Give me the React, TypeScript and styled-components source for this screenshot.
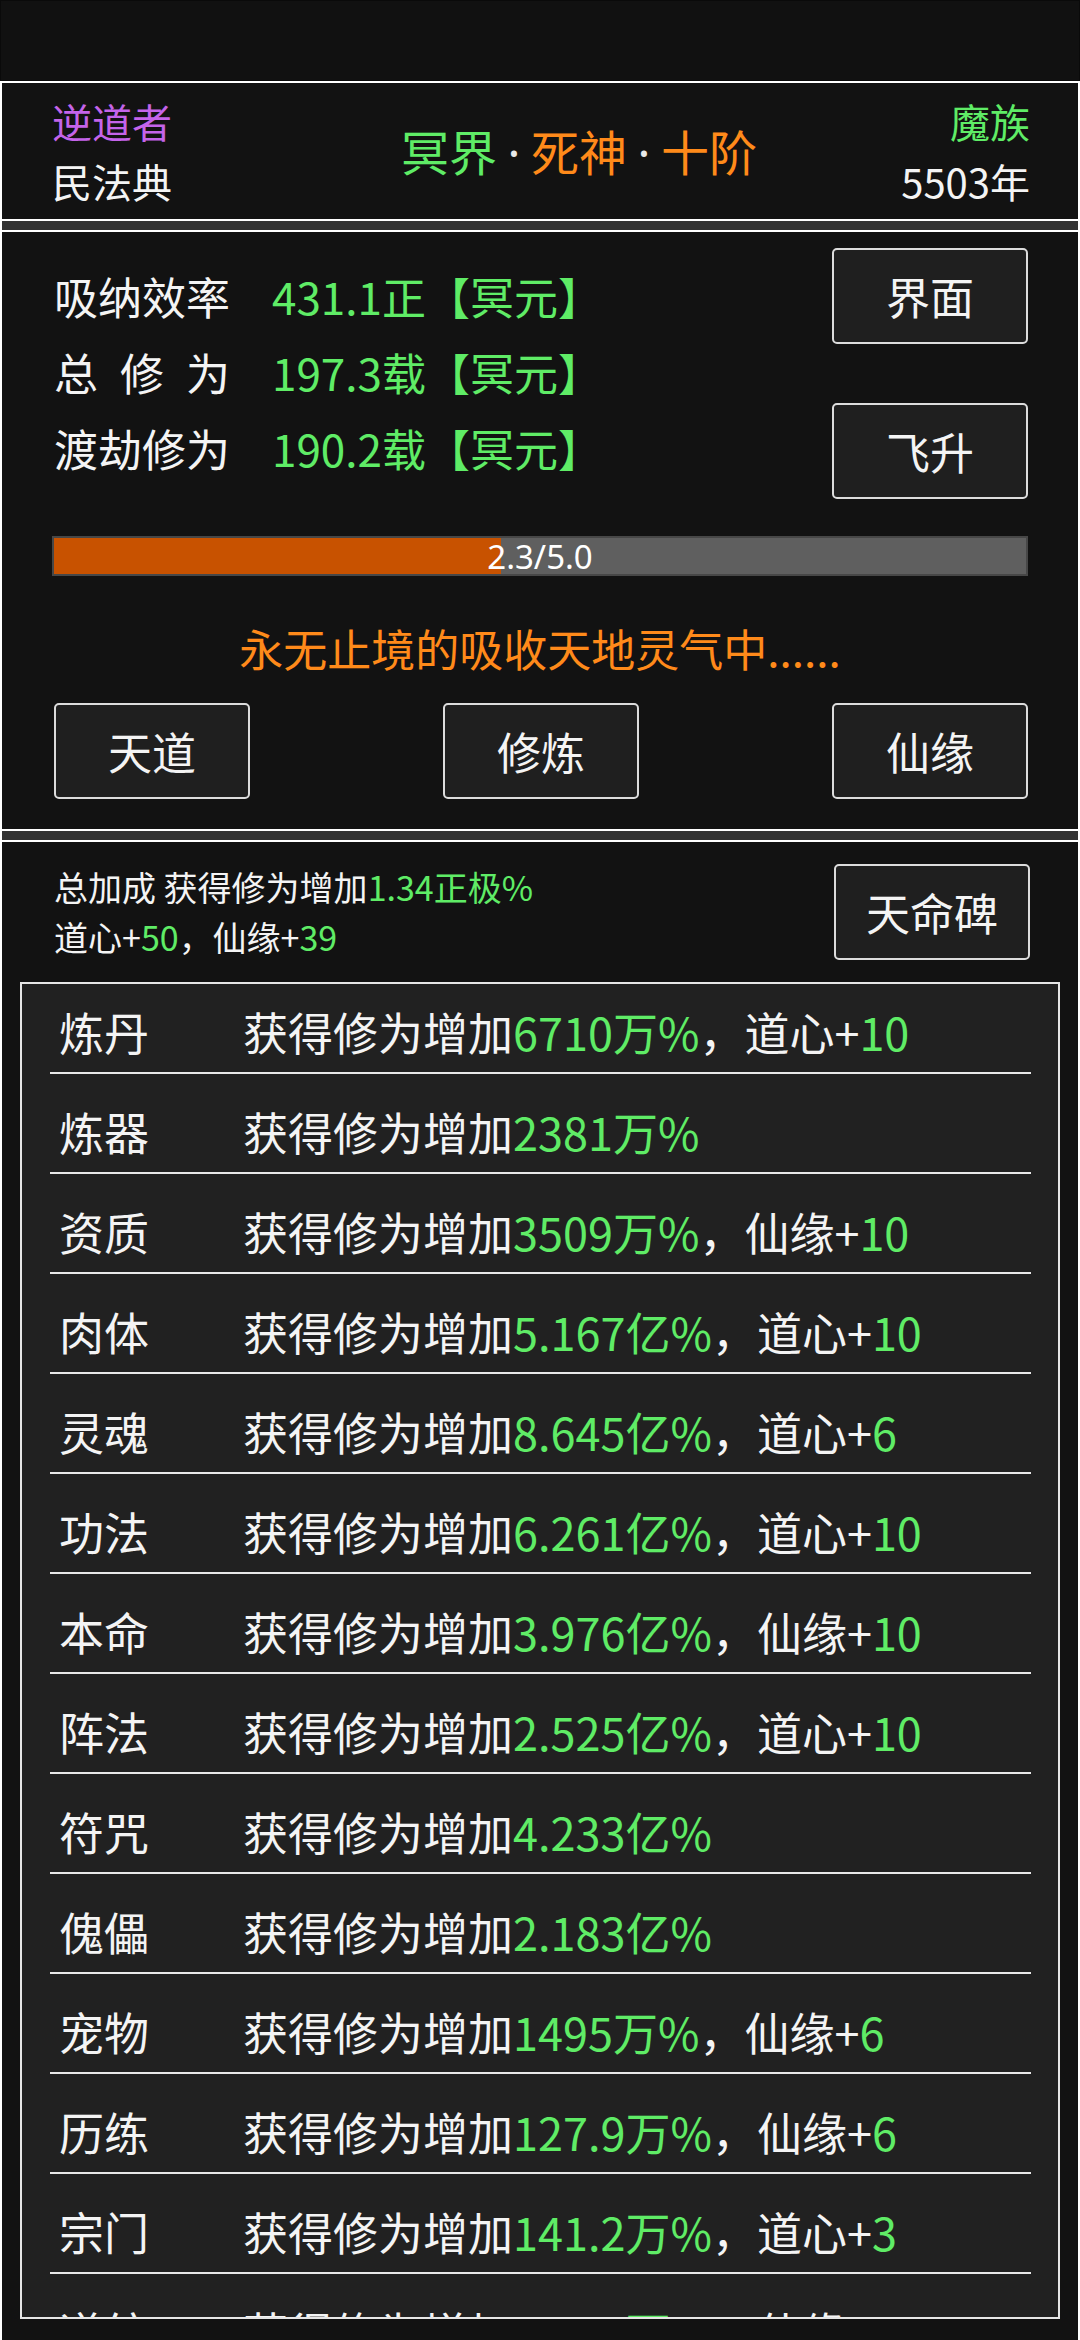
import * as React from 'react';
import styled, { createGlobalStyle } from 'styled-components';

const GREEN = '#5fec66';
const ORANGE = '#ff8a1a';
const PURPLE = '#c464ea';
const WHITE = '#f4f4f4';

const GlobalStyle = createGlobalStyle`
  html, body {
    margin: 0;
    padding: 0;
    background: #ffffff;
  }
  body {
    font-family: "Noto Sans CJK SC", "Noto Sans", sans-serif;
    color: ${WHITE};
  }
  * {
    box-sizing: border-box;
  }
`;

const Screen = styled.div`
  width: 1080px;
  height: 2340px;
  display: flex;
  flex-direction: column;
  gap: 2px;
  background: #ffffff;
  overflow: hidden;
`;

const StatusBar = styled.div`
  flex-shrink: 0;
  height: 81px;
  background: #111111;
  border: 1px solid #0a0a0a;
`;

const Panel = styled.div`
  flex-shrink: 0;
  margin: 0 2px;
  background: #121212;
`;

const Divider = styled.div`
  flex-shrink: 0;
  margin: 0 2px;
  height: 9px;
  background: #333333;
`;

/* header */

const Header = styled(Panel)`
  height: 136px;
  padding: 8px 48px 8px 50px;
  display: grid;
  grid-template-columns: 1fr auto 1fr;
  align-items: center;
`;

const Side = styled.div<{ $right?: boolean }>`
  display: flex;
  flex-direction: column;
  align-items: ${p => (p.$right ? 'flex-end' : 'flex-start')};
  font-size: 40px;
  line-height: 60px;
`;

const Tint = styled.span<{ $c: string }>`
  color: ${p => p.$c};
`;

const Title = styled.div`
  font-size: 48px;
  line-height: 60px;
  white-space: nowrap;
  padding-left: 76px;
`;

const Dot = styled.span`
  display: inline-block;
  width: 34px;
  text-align: center;
  font-family: "Noto Sans", "DejaVu Sans", sans-serif;
  color: #e8e8e8;
`;

/* cultivation panel */

const MainPanel = styled(Panel)`
  height: 597px;
  padding: 16px 50px 30px 50px;
  display: flex;
  flex-direction: column;
`;

const TopSection = styled.div`
  display: flex;
  justify-content: space-between;
  height: 251px;
`;

const Stats = styled.div`
  padding-top: 10px;
  padding-left: 2px;
  display: flex;
  flex-direction: column;
`;

const StatRow = styled.div`
  display: flex;
  height: 76px;
  align-items: center;
  font-size: 44px;
  white-space: nowrap;
`;

const StatLabel = styled.span<{ $spread?: boolean }>`
  width: 218px;
  letter-spacing: ${p => (p.$spread ? '22px' : '0')};
`;

const StatValue = styled.span`
  color: ${GREEN};
`;

const ButtonCol = styled.div`
  display: flex;
  flex-direction: column;
  gap: 59px;
`;

const ActionButton = styled.button`
  width: 196px;
  height: 96px;
  padding: 0;
  border: 2px solid #dcdcdc;
  border-radius: 5px;
  background: #1f1f1f;
  color: ${WHITE};
  font-family: "Noto Sans CJK SC", "Noto Sans", sans-serif;
  font-size: 44px;
  cursor: pointer;
  flex-shrink: 0;
`;

const Progress = styled.div`
  position: relative;
  margin: 37px 0 0 0;
  height: 40px;
  background: #5f5f5f;
  border: 2px solid #474747;
`;

const ProgressFill = styled.div`
  height: 100%;
  background: #c85200;
`;

const ProgressText = styled.span`
  position: absolute;
  inset: 0;
  display: flex;
  align-items: center;
  justify-content: center;
  font-family: "Noto Sans", "Open Sans", sans-serif;
  font-size: 33px;
  color: #ffffff;
`;

const Message = styled.div`
  margin-top: 42px;
  height: 60px;
  line-height: 60px;
  text-align: center;
  font-size: 44px;
  color: ${ORANGE};
`;

const ButtonRow = styled.div`
  margin-top: 25px;
  padding-left: 2px;
  display: flex;
  justify-content: space-between;
`;

/* bonus panel */

const BonusPanel = styled(Panel)`
  flex: 1;
  min-height: 0;
  padding: 20px 0 21px 0;
  display: flex;
  flex-direction: column;
`;

const Summary = styled.div`
  height: 100px;
  padding: 0 48px 0 52px;
  display: flex;
  align-items: center;
  justify-content: space-between;
`;

const SummaryText = styled.div`
  font-size: 34px;
  line-height: 50px;
  white-space: nowrap;
`;

const ListBox = styled.div`
  flex: 1;
  min-height: 0;
  margin: 20px 18px 0 18px;
  border: 2px solid #e6e6e6;
  background: #212121;
  overflow: hidden;
  padding: 0 27px 0 28px;
`;

const ListInner = styled.div`
  margin-top: -10px;
`;

const Row = styled.div`
  height: 100px;
  padding-top: 17px;
  border-bottom: 2px solid #e8e8e8;
  display: flex;
  align-items: center;
  font-size: 45px;
  white-space: nowrap;
`;

const RowLabel = styled.span`
  width: 193px;
  padding-left: 9px;
`;

type Bonus = {
  name: string;
  value: string;
  extra?: [string, string];
};

const bonuses: Bonus[] = [
  { name: '炼丹', value: '6710万%', extra: ['道心', '10'] },
  { name: '炼器', value: '2381万%' },
  { name: '资质', value: '3509万%', extra: ['仙缘', '10'] },
  { name: '肉体', value: '5.167亿%', extra: ['道心', '10'] },
  { name: '灵魂', value: '8.645亿%', extra: ['道心', '6'] },
  { name: '功法', value: '6.261亿%', extra: ['道心', '10'] },
  { name: '本命', value: '3.976亿%', extra: ['仙缘', '10'] },
  { name: '阵法', value: '2.525亿%', extra: ['道心', '10'] },
  { name: '符咒', value: '4.233亿%' },
  { name: '傀儡', value: '2.183亿%' },
  { name: '宠物', value: '1495万%', extra: ['仙缘', '6'] },
  { name: '历练', value: '127.9万%', extra: ['仙缘', '6'] },
  { name: '宗门', value: '141.2万%', extra: ['道心', '3'] },
  { name: '道统', value: '14.25万%', extra: ['仙缘', '3'] },
];

const progress = 2.3 / 5.0;

export default function App() {
  return (
    <>
      <GlobalStyle />
      <Screen>
        <StatusBar />

        <Header>
          <Side>
            <Tint $c={PURPLE}>逆道者</Tint>
            <span>民法典</span>
          </Side>
          <Title>
            <Tint $c={GREEN}>冥界</Tint>
            <Dot>·</Dot>
            <Tint $c={ORANGE}>死神</Tint>
            <Dot>·</Dot>
            <Tint $c={ORANGE}>十阶</Tint>
          </Title>
          <Side $right>
            <Tint $c={GREEN}>魔族</Tint>
            <span>5503年</span>
          </Side>
        </Header>

        <Divider />

        <MainPanel>
          <TopSection>
            <Stats>
              <StatRow>
                <StatLabel>吸纳效率</StatLabel>
                <StatValue>431.1正【冥元】</StatValue>
              </StatRow>
              <StatRow>
                <StatLabel $spread>总修为</StatLabel>
                <StatValue>197.3载【冥元】</StatValue>
              </StatRow>
              <StatRow>
                <StatLabel>渡劫修为</StatLabel>
                <StatValue>190.2载【冥元】</StatValue>
              </StatRow>
            </Stats>
            <ButtonCol>
              <ActionButton>界面</ActionButton>
              <ActionButton>飞升</ActionButton>
            </ButtonCol>
          </TopSection>

          <Progress>
            <ProgressFill style={{ width: `${progress * 100}%` }} />
            <ProgressText>2.3/5.0</ProgressText>
          </Progress>

          <Message>永无止境的吸收天地灵气中......</Message>

          <ButtonRow>
            <ActionButton>天道</ActionButton>
            <ActionButton>修炼</ActionButton>
            <ActionButton>仙缘</ActionButton>
          </ButtonRow>
        </MainPanel>

        <Divider />

        <BonusPanel>
          <Summary>
            <SummaryText>
              <div>
                总加成 获得修为增加<Tint $c={GREEN}>1.34正极%</Tint>
              </div>
              <div>
                道心+<Tint $c={GREEN}>50</Tint>，仙缘+<Tint $c={GREEN}>39</Tint>
              </div>
            </SummaryText>
            <ActionButton>天命碑</ActionButton>
          </Summary>

          <ListBox>
            <ListInner>
              {bonuses.map(b => (
                <Row key={b.name}>
                  <RowLabel>{b.name}</RowLabel>
                  <span>
                    获得修为增加<Tint $c={GREEN}>{b.value}</Tint>
                    {b.extra ? (
                      <>
                        ，{b.extra[0]}+<Tint $c={GREEN}>{b.extra[1]}</Tint>
                      </>
                    ) : null}
                  </span>
                </Row>
              ))}
            </ListInner>
          </ListBox>
        </BonusPanel>
      </Screen>
    </>
  );
}
